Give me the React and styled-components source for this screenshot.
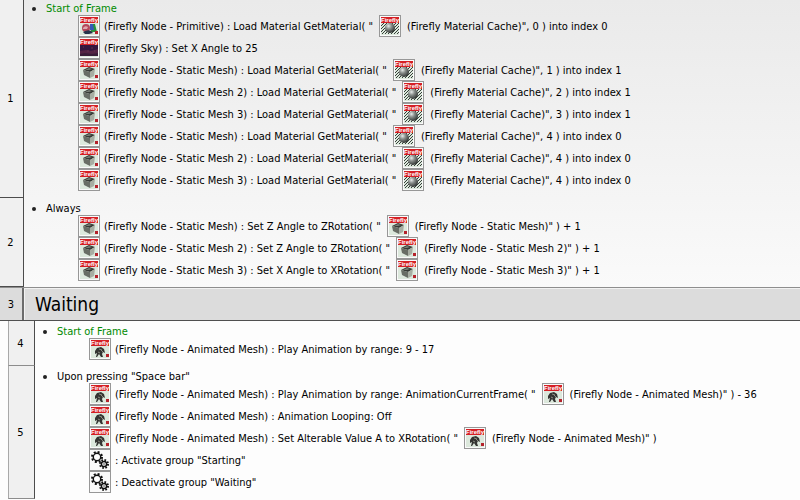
import React from "react";
import styled, { createGlobalStyle } from "styled-components";

const GlobalStyle = createGlobalStyle`
  * { box-sizing: border-box; }
  body {
    margin: 0;
    background: #fdfdfd;
    color: #000;
    font-family: "DejaVu Sans Condensed", "Noto Sans", sans-serif;
    font-size: 11px;
    line-height: 13px;
  }
`;

const Editor = styled.main`
  overflow: hidden;
`;

const TopEvents = styled.section`
  background: linear-gradient(#eaeaea, #fafafa);
`;

const GroupEvents = styled.section`
  padding-left: 8px;
  background: #fdfdfd;
`;

const EventRow = styled.article`
  display: grid;
  grid-template-columns: ${(p) => (p.$nested ? "27px" : "24px")} minmax(0, 1fr);
`;

const LineNumber = styled.div`
  display: flex;
  align-items: center;
  justify-content: center;
  padding-right: 2px;
  background: #f0f0f0;
  border-right: 1px solid #4c4c4c;
  border-bottom: 1px solid ${(p) => (p.$nested ? "#8c8c8c" : "#4c4c4c")};
  border-left: ${(p) => (p.$nested ? "1px solid #a8a8a8" : "0")};
`;

const EventBody = styled.div`
  padding: ${(p) => (p.$first ? "2px 0 7px 8px" : "4px 0 6px 8px")};
`;

const Condition = styled.h2`
  display: flex;
  align-items: center;
  gap: 10px;
  margin: 0;
  font-size: 11px;
  font-weight: 400;
  line-height: 13px;
  color: ${(p) => (p.$start ? "#008a00" : "#000")};

  &::before {
    content: "";
    width: 4px;
    height: 4px;
    border-radius: 50%;
    background: #222;
  }
`;

const Actions = styled.ul`
  list-style: none;
  margin: 0;
  padding: 0 0 0 46px;
`;

const Action = styled.li`
  display: flex;
  align-items: center;
  gap: 4px;
  height: 22px;
  white-space: nowrap;
`;

const GroupHeader = styled.header`
  display: grid;
  grid-template-columns: 24px minmax(0, 1fr);
  height: 34px;
  background: #dcdcdc;
  border-top: 1px solid #8e8e8e;
  border-bottom: 1px solid #505050;
`;

const GroupNumber = styled.div`
  display: flex;
  align-items: center;
  justify-content: center;
  border-right: 2px solid #6c6c6c;
`;

const GroupTitle = styled.h1`
  display: flex;
  align-items: center;
  margin: 0;
  padding-left: 10px;
  border-top: 1px solid #f2f2f2;
  border-left: 1px solid #f2f2f2;
  font-size: 19px;
  font-weight: 400;
`;

const IconSvg = styled.svg`
  flex: none;
  width: 22px;
  height: 22px;
  margin: 0 ${(p) => (p.$inline ? "2px" : "0")};
`;

function Banner() {
  return (
    <>
      <rect x="2" y="2" width="18" height="6" fill="#d51f25" />
      <text x="11" y="7" textAnchor="middle" fontSize="6" fontWeight="700" fill="#fff" fontFamily="Liberation Sans, sans-serif">
        Firefly
      </text>
    </>
  );
}

function Art({ kind }) {
  if (kind === "primitive")
    return (
      <>
        <path d="M12 9h5l2 8h-6z" fill="#27923b" />
        <path d="M12 9h3l1 6h-4z" fill="#3758b9" />
        <circle cx="8" cy="13" r="4" fill="#b5485a" />
        <path d="M5 13q2-3 5-1l-1 2H5z" fill="#dda9ae" />
        <path d="M5 17q5-3 8-1l2 2-4 1H7z" fill="#28334c" />
        <rect x="17" y="16" width="3" height="3" fill="#b5222b" />
      </>
    );
  if (kind === "sky")
    return (
      <>
        <rect x="2" y="8" width="18" height="11" fill="#35173f" />
        <path d="M2 14l6-1 5 1 7-2v7H2z" fill="#542344" />
        <path d="M2 17l5-1 7 1 6-1v3H2z" fill="#3a1c38" />
        <path d="M5 10h1m7 1h2m-6 3h2m5 0h1" stroke="#633350" />
      </>
    );
  if (kind === "mesh")
    return (
      <>
        <path d="M5 11l6-3 6 2-5 3z" fill="#363a35" />
        <path d="M5 11l7 2v6l-6-3z" fill="#686d65" />
        <path d="M12 13l5-3-1 7-4 2z" fill="#a7ada2" />
        <path d="M7 11l4-2 3 1-3 1z" fill="#777c73" />
        <rect x="17" y="16" width="3" height="3" fill="#b5222b" />
      </>
    );
  if (kind === "animated")
    return (
      <>
        <path d="M6 13l2-3 4-1 3 2 1 4-2-1-1 2 1 3h-2l-2-3-2 3H7l1-4-2 1z" fill="#343432" />
        <path d="M10 11l3 1m-4 2l2 1m1-3l2 2" stroke="#8b8d81" />
        <rect x="17" y="16" width="3" height="3" fill="#b5222b" />
      </>
    );
  return (
    <>
      <defs>
        <radialGradient id="ball" cx="0.35" cy="0.3" r="0.75">
          <stop offset="0" stopColor="#e8ecea" />
          <stop offset="0.4" stopColor="#8a8f8c" />
          <stop offset="1" stopColor="#2c302e" />
        </radialGradient>
      </defs>
      <path d="M2 11l3-3M2 14l6-6M2 17l9-9M3 19L14 8M6 19L17 8M9 19L20 8M12 19l8-8M15 19l5-5M18 19l2-2" stroke="#353e38" />
      <circle cx="11" cy="13" r="5" fill="url(#ball)" />
    </>
  );
}

function Gears() {
  return (
    <>
      <circle cx="8" cy="8" r="5" fill="none" stroke="#111" strokeWidth="2" strokeDasharray="2 1.93" />
      <circle cx="8" cy="8" r="3.7" fill="#fff" stroke="#111" strokeWidth="1.4" />
      <circle cx="15" cy="15" r="4" fill="none" stroke="#111" strokeWidth="2" strokeDasharray="1.6 1.54" />
      <circle cx="15" cy="15" r="2.6" fill="#fff" stroke="#111" strokeWidth="1.5" />
      <circle cx="15" cy="15" r="0.7" fill="#111" />
    </>
  );
}

function ObjectIcon({ kind, inline }) {
  return (
    <IconSvg $inline={inline} viewBox="0 0 22 22" aria-hidden="true">
      <rect x="0.5" y="0.5" width="21" height="21" fill="#fafafa" stroke="#979797" />
      {kind === "gears" ? (
        <Gears />
      ) : (
        <>
          <rect x="2" y="2" width="18" height="18" fill="#dce8dc" />
          <Art kind={kind} />
          <Banner />
        </>
      )}
    </IconSvg>
  );
}

const load = (name, index, target, kind = "mesh") => ({
  kind,
  text: `(Firefly Node - ${name}) : Load Material GetMaterial( "`,
  ref: "material",
  tail: `(Firefly Material Cache)", ${index} ) into index ${target}`,
});

const rotate = (name, axis) => ({
  kind: "mesh",
  text: `(Firefly Node - ${name}) : Set ${axis} Angle to ${axis}Rotation( "`,
  ref: "mesh",
  tail: `(Firefly Node - ${name})" ) + 1`,
});

const animated = (text, tail) => ({
  kind: "animated",
  text: `(Firefly Node - Animated Mesh) : ${text}`,
  ref: tail && "animated",
  tail,
});

const topEvents = [
  {
    number: 1,
    condition: "Start of Frame",
    start: true,
    actions: [
      load("Primitive", 0, 0, "primitive"),
      { kind: "sky", text: "(Firefly Sky) : Set X Angle to 25" },
      load("Static Mesh", 1, 1),
      load("Static Mesh 2", 2, 1),
      load("Static Mesh 3", 3, 1),
      load("Static Mesh", 4, 0),
      load("Static Mesh 2", 4, 0),
      load("Static Mesh 3", 4, 0),
    ],
  },
  {
    number: 2,
    condition: "Always",
    actions: [rotate("Static Mesh", "Z"), rotate("Static Mesh 2", "Z"), rotate("Static Mesh 3", "X")],
  },
];

const groupEvents = [
  { number: 4, condition: "Start of Frame", start: true, actions: [animated("Play Animation by range: 9 - 17")] },
  {
    number: 5,
    condition: 'Upon pressing "Space bar"',
    actions: [
      animated('Play Animation by range: AnimationCurrentFrame( "', '(Firefly Node - Animated Mesh)" ) - 36'),
      animated("Animation Looping: Off"),
      animated('Set Alterable Value A to XRotation( "', '(Firefly Node - Animated Mesh)" )'),
      { kind: "gears", text: ': Activate group "Starting"' },
      { kind: "gears", text: ': Deactivate group "Waiting"' },
    ],
  },
];

function Event({ event, nested }) {
  return (
    <EventRow $nested={nested}>
      <LineNumber $nested={nested}>{event.number}</LineNumber>
      <EventBody $first={event.number === 1}>
        <Condition $start={event.start}>{event.condition}</Condition>
        <Actions>
          {event.actions.map((action, i) => (
            <Action key={i}>
              <ObjectIcon kind={action.kind} />
              <span>{action.text}</span>
              {action.ref && <ObjectIcon kind={action.ref} inline />}
              {action.tail && <span>{action.tail}</span>}
            </Action>
          ))}
        </Actions>
      </EventBody>
    </EventRow>
  );
}

export default function App() {
  return (
    <>
      <GlobalStyle />
      <Editor>
        <TopEvents>
          {topEvents.map((event) => (
            <Event key={event.number} event={event} />
          ))}
        </TopEvents>
        <GroupHeader>
          <GroupNumber>3</GroupNumber>
          <GroupTitle>Waiting</GroupTitle>
        </GroupHeader>
        <GroupEvents>
          {groupEvents.map((event) => (
            <Event key={event.number} event={event} nested />
          ))}
        </GroupEvents>
      </Editor>
    </>
  );
}
